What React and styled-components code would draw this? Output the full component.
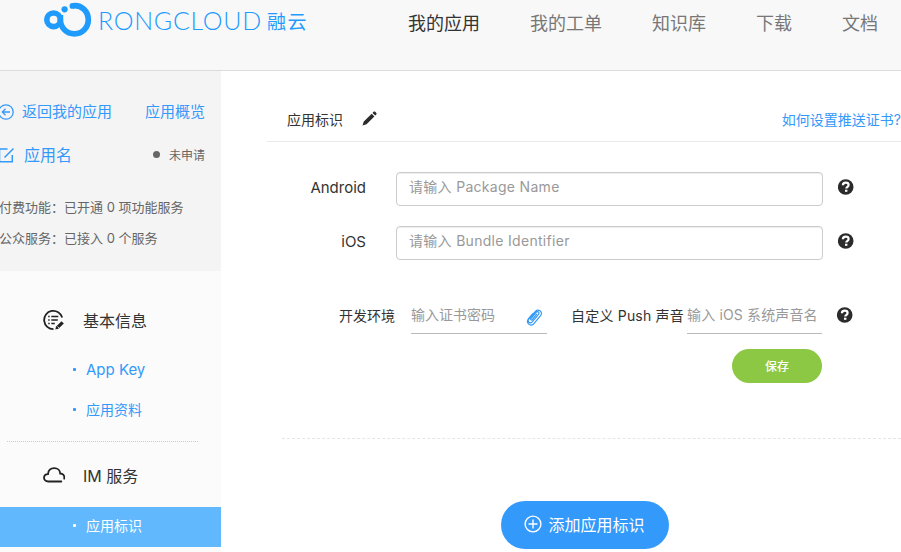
import React from 'react';
import styled, { createGlobalStyle } from 'styled-components';

const GlobalStyle = createGlobalStyle`
  * { box-sizing: border-box; }
  body {
    margin: 0;
    background: #fff;
    color: #333;
    font-family: Inter, "Noto Sans CJK SC", sans-serif;
    font-size: 14px;
    overflow: hidden;
  }
`;

const Page = styled.div`
  width: 901px;
  height: 552px;
  overflow: hidden;
  display: flex;
  flex-direction: column;
`;

const Header = styled.header`
  height: 71px;
  flex: none;
  display: flex;
  align-items: flex-start;
  background: #f8f8f8;
  border-bottom: 1px solid #dcdcdc;
`;

const Brand = styled.a`
  display: flex;
  width: 408px;
  padding-left: 43px;
  color: #1f9bfd;
  white-space: nowrap;
`;

const BrandMark = styled.svg`
  width: 50px;
  height: 40px;
  flex: none;
`;

const BrandName = styled.span`
  width: 174px;
  padding-left: 5px;
  line-height: 41px;
  font-family: Lato, sans-serif;
  font-weight: 300;
  font-size: 25px;
  letter-spacing: 0.7px;
`;

const BrandNameCn = styled.span`
  font-family: "Noto Sans CJK SC", sans-serif;
  font-weight: 400;
  font-size: 19px;
  line-height: 41px;
  letter-spacing: 1.6px;
`;

const TopNav = styled.nav`
  display: flex;
  gap: 50px;
`;

const TopLink = styled.a`
  font-size: 18px;
  line-height: 48px;
  white-space: nowrap;
  color: ${(p) => (p.$active ? '#333' : '#777')};
`;

const Body = styled.div`
  display: flex;
  flex: 1;
  min-height: 0;
`;

const Sidebar = styled.aside`
  width: 221px;
  flex: none;
  background: #fbfbfb;
`;

const AppPanel = styled.section`
  height: 200px;
  padding-top: 20px;
  background: #f4f4f4;
`;

const PanelRow = styled.div`
  display: flex;
  align-items: center;
  height: ${(p) => p.$height}px;
  padding-right: 16px;
`;

const PanelIcon = styled.svg`
  width: 16px;
  height: 16px;
  flex: none;
  margin-left: -2px;
  margin-right: ${(p) => p.$gap}px;
`;

const PanelLink = styled.a`
  color: #3399fa;
  font-size: ${(p) => p.$size || 15}px;
  line-height: 24px;
  white-space: nowrap;
`;

const RightLink = styled(PanelLink)`
  margin-left: auto;
`;

const Status = styled.span`
  display: flex;
  align-items: center;
  gap: 9px;
  margin-left: auto;
  padding-top: 1px;
  font-size: 12px;
  line-height: 20px;
  color: #666;

  &::before {
    content: "";
    width: 7px;
    height: 7px;
    margin-top: -2px;
    border-radius: 50%;
    background: #666;
  }
`;

const ServiceList = styled.div`
  margin: 15px 0 0 -1px;
  font-size: 13px;
  line-height: 31px;
  color: #666;
  white-space: nowrap;
`;

const MenuTitle = styled.h3`
  display: flex;
  align-items: center;
  margin: 0;
  padding: ${(p) => p.$top || 0}px 0 0 43px;
  height: ${(p) => p.$height}px;
  font-size: 16px;
  font-weight: 400;
`;

const MenuIcon = styled.svg`
  width: 23px;
  height: 22px;
  margin-right: 17px;
  flex: none;
`;

const MenuItem = styled.a`
  display: flex;
  align-items: center;
  height: 40px;
  padding: 0 0 4px 73px;
  font-size: ${(p) => p.$size || 14}px;
  color: ${(p) => (p.$active ? '#fff' : '#3399fa')};
  background: ${(p) => (p.$active ? '#62b8fd' : 'transparent')};

  &::before {
    content: "";
    width: 3px;
    height: 3px;
    margin-right: 10px;
    border-radius: 1px;
    background: currentColor;
  }
`;

const MenuDivider = styled.div`
  margin: 10px 23px 0 7px;
  border-top: 1px dotted #ccc;
`;

const Main = styled.main`
  flex: 1;
  min-width: 0;
  padding: 27px 0 0 46px;
  display: flex;
  flex-direction: column;
`;

const SectionHead = styled.div`
  display: flex;
  align-items: center;
  height: 44px;
  padding: 0 0 2px 20px;
  border-bottom: 1px solid #eaeaea;
`;

const SectionTitle = styled.h2`
  margin: 0;
  font-size: 14px;
  font-weight: 400;
`;

const PencilIcon = styled.svg`
  width: 15px;
  height: 15px;
  margin-left: 19px;
`;

const HelpLink = styled.a`
  margin: 0 0 0 auto;
  color: #3399fa;
  font-size: 14px;
  white-space: nowrap;
`;

const Field = styled.div`
  display: flex;
  height: 34px;
  margin-top: ${(p) => p.$top}px;
`;

const FieldLabel = styled.label`
  width: 99px;
  margin-right: 30px;
  line-height: 32px;
  font-size: 15px;
  text-align: right;
`;

const TextInput = styled.input`
  width: 427px;
  height: 34px;
  padding: 0 12px 5px;
  border: 1px solid #ccc;
  border-radius: 4px;
  outline: 0;
  background: #fff;
  box-shadow: inset 0 1px 1px rgba(0, 0, 0, 0.075);
  font-family: inherit;
  font-size: 14px;
  letter-spacing: 0.3px;

  &::placeholder { color: #999; opacity: 1; }
`;

const HelpIcon = styled.svg`
  width: 16px;
  height: 16px;
  margin: ${(p) => p.$top}px 0 0 15px;
  flex: none;
`;

const CertRow = styled.div`
  display: flex;
  height: 36px;
  margin-top: 38px;
  padding-left: 72px;
`;

const CertLabel = styled.label`
  flex: none;
  width: ${(p) => p.$width}px;
  line-height: 35px;
  white-space: nowrap;
  letter-spacing: ${(p) => p.$spacing || 0}px;
`;

const LineBox = styled.div`
  flex: none;
  display: flex;
  width: ${(p) => p.$width}px;
  height: 36px;
  margin-right: ${(p) => p.$gap || 0}px;
  border-bottom: 1px solid #bbb;
`;

const LineInput = styled.input`
  flex: 1;
  min-width: 0;
  padding: 0 0 2px;
  border: 0;
  outline: 0;
  background: transparent;
  font-family: inherit;
  font-size: 14px;
  letter-spacing: ${(p) => p.$spacing || 0}px;

  &::placeholder { color: #999; opacity: 1; }
`;

const ClipIcon = styled.svg`
  width: 16px;
  height: 18px;
  margin: 10px 5px 0 0;
`;

const SaveButton = styled.button`
  width: 90px;
  height: 34px;
  margin: 15px 79px 0 auto;
  padding: 0 0 2px;
  flex: none;
  border: 0;
  border-radius: 17px;
  background: #8cc843;
  color: #fff;
  font-family: inherit;
  font-size: 12px;
  font-weight: 500;
`;

const DashedLine = styled.div`
  margin: 55px 0 0 15px;
  border-top: 1px dashed #e6e6e6;
`;

const AddButton = styled.button`
  display: flex;
  align-items: center;
  width: 168px;
  height: 48px;
  margin: 62px 0 0 233.5px;
  padding: 0 0 3px 23px;
  flex: none;
  border: 0;
  border-radius: 24px;
  background: #3399fa;
  color: #fff;
  font-family: inherit;
  font-size: 16px;
  white-space: nowrap;
`;

const PlusIcon = styled.svg`
  width: 18px;
  height: 18px;
  margin-right: 7px;
`;

const Help = ({ top = 7 }) => (
  <HelpIcon $top={top} viewBox="0 0 16 16">
    <circle cx="7.700" cy="8" r="7.800" fill="#2b2b2b" />
    <path d="M4.900 6.300C4.900 4.600 6 3.700 7.700 3.700s2.900.9 2.900 2.300c0 1.800-2.300 1.800-2.300 3.600" fill="none" stroke="#fff" strokeWidth="2.200" />
    <rect x="7" y="10.700" width="2.400" height="2.100" fill="#fff" />
  </HelpIcon>
);

export default function App() {
  return (
    <Page>
      <GlobalStyle />
      <Header>
        <Brand>
          <BrandMark viewBox="43 0 50 40" fill="none" stroke="#1f9bfd">
            <circle cx="53.600" cy="19.800" r="6.800" strokeWidth="5.600" />
            <path d="M72.600 5.900C81.500 4.300 88.300 11.500 88.300 19.800C88.300 27.800 82.200 33.900 74.500 33.900C66.500 33.900 60.400 27.800 60.400 19.800V15" strokeWidth="5.700" />
            <circle cx="72.400" cy="5.900" r="2.850" fill="#1f9bfd" stroke="none" />
            <circle cx="64.600" cy="9.300" r="3.100" fill="#1f9bfd" stroke="none" />
          </BrandMark>
          <BrandName>RONGCLOUD</BrandName>
          <BrandNameCn>融云</BrandNameCn>
        </Brand>
        <TopNav>
          <TopLink $active>我的应用</TopLink>
          <TopLink>我的工单</TopLink>
          <TopLink>知识库</TopLink>
          <TopLink>下载</TopLink>
          <TopLink>文档</TopLink>
        </TopNav>
      </Header>
      <Body>
        <Sidebar>
          <AppPanel>
            <PanelRow $height={42}>
              <PanelIcon $gap={8} viewBox="0 0 16 16" fill="none" stroke="#3399fa" strokeWidth="1.300">
                <circle cx="8" cy="8" r="7.200" />
                <path d="M12 8H4.500M7.500 4.800L4.300 8l3.200 3.200" />
              </PanelIcon>
              <PanelLink>返回我的应用</PanelLink>
              <RightLink>应用概览</RightLink>
            </PanelRow>
            <PanelRow $height={44}>
              <PanelIcon $gap={10} viewBox="0 0 16 16" fill="none" stroke="#3399fa" strokeWidth="1.500">
                <path d="M9.500 2H1.500v12.800h12.800V8M6.500 10.500L15.500 1.500" />
              </PanelIcon>
              <PanelLink $size={16}>应用名</PanelLink>
              <Status>未申请</Status>
            </PanelRow>
            <ServiceList>
              <div>付费功能：已开通 0 项功能服务</div>
              <div>公众服务：已接入 0 个服务</div>
            </ServiceList>
          </AppPanel>
          <MenuTitle $height={80} $top={17}>
            <MenuIcon viewBox="0 0 23 22" fill="none" stroke="#222" strokeWidth="1.800">
              <path d="M19.200 8.500A9.200 9.200 0 1 0 10.500 20.200" />
              <path d="M5.200 7.500h1.500M8.300 7.500h7M5.200 11h1.500M8.300 11h6.500M5.200 14.500h1.500M8.300 14.500h3.500" strokeWidth="1.600" />
              <path d="M12.300 20.600l.8-3 5.400-5.300 2.300 2.200-5.400 5.300z" fill="#222" stroke="none" />
              <path d="M14.500 17.500l1.500 1.500" stroke="#fff" strokeWidth=".8" />
            </MenuIcon>
            基本信息
          </MenuTitle>
          <MenuItem $size={15}>App Key</MenuItem>
          <MenuItem>应用资料</MenuItem>
          <MenuDivider />
          <MenuTitle $height={65}>
            <MenuIcon viewBox="0 0 23 22" fill="none" stroke="#222" strokeWidth="1.800" strokeLinecap="round">
              <path d="M18.300 17.500H5.200C2.700 17.500 1 15.900 1 13.800S2.700 10.200 5 10.100C5.300 6.500 7.900 4.200 11.300 4.200S17 6.500 17.200 9.500C19.800 9.500 22 11.300 21.200 14.700" />
            </MenuIcon>
            IM 服务
          </MenuTitle>
          <MenuItem $active>应用标识</MenuItem>
        </Sidebar>
        <Main>
          <SectionHead>
            <SectionTitle>应用标识</SectionTitle>
            <PencilIcon viewBox="0 0 15 15" fill="#2b2b2b">
              <path d="M.5 14.500l1.300-4L9.700 2.700l2.700 2.700-7.900 7.800zM10.500 1.900l1.100-1.100c.5-.5 1.100-.5 1.600 0l1.100 1.100c.5.500.5 1.100 0 1.600l-1.100 1.100z" />
            </PencilIcon>
            <HelpLink>如何设置推送证书?</HelpLink>
          </SectionHead>
          <Field $top={30}>
            <FieldLabel>Android</FieldLabel>
            <TextInput placeholder="请输入 Package Name" />
            <Help />
          </Field>
          <Field $top={20}>
            <FieldLabel>iOS</FieldLabel>
            <TextInput placeholder="请输入 Bundle Identifier" />
            <Help />
          </Field>
          <CertRow>
            <CertLabel $width={72}>开发环境</CertLabel>
            <LineBox $width={136} $gap={24}>
              <LineInput placeholder="输入证书密码" />
              <ClipIcon viewBox="0 0 16 18" fill="none" stroke="#3399fa" strokeWidth="1.200" strokeLinecap="round" strokeLinejoin="round">
                <path d="M10.700 6.200L6.200 11.600c-.8.900-2 0-1.300-1l5.200-6.200c1.500-1.700 3.800.1 2.400 1.900l-6.300 7.500c-2.200 2.400-5.300-.2-3.400-2.600L8.900 4c2.800-4 8.700-.6 5.700 3.700l-6.700 8c-3.700 3.300-8.300-.6-5.600-4.700l4.500-5.300" />
              </ClipIcon>
            </LineBox>
            <CertLabel $width={116} $spacing={0.2}>自定义 Push 声音</CertLabel>
            <LineBox $width={135}>
              <LineInput $spacing={0.15} placeholder="输入 iOS 系统声音名" />
            </LineBox>
            <Help top={9} />
          </CertRow>
          <SaveButton>保存</SaveButton>
          <DashedLine />
          <AddButton>
            <PlusIcon viewBox="0 0 18 18" fill="none" stroke="#fff" strokeWidth="1.400">
              <circle cx="9" cy="9" r="7.900" />
              <path d="M9 4.500v9M4.500 9h9" />
            </PlusIcon>
            添加应用标识
          </AddButton>
        </Main>
      </Body>
    </Page>
  );
}
